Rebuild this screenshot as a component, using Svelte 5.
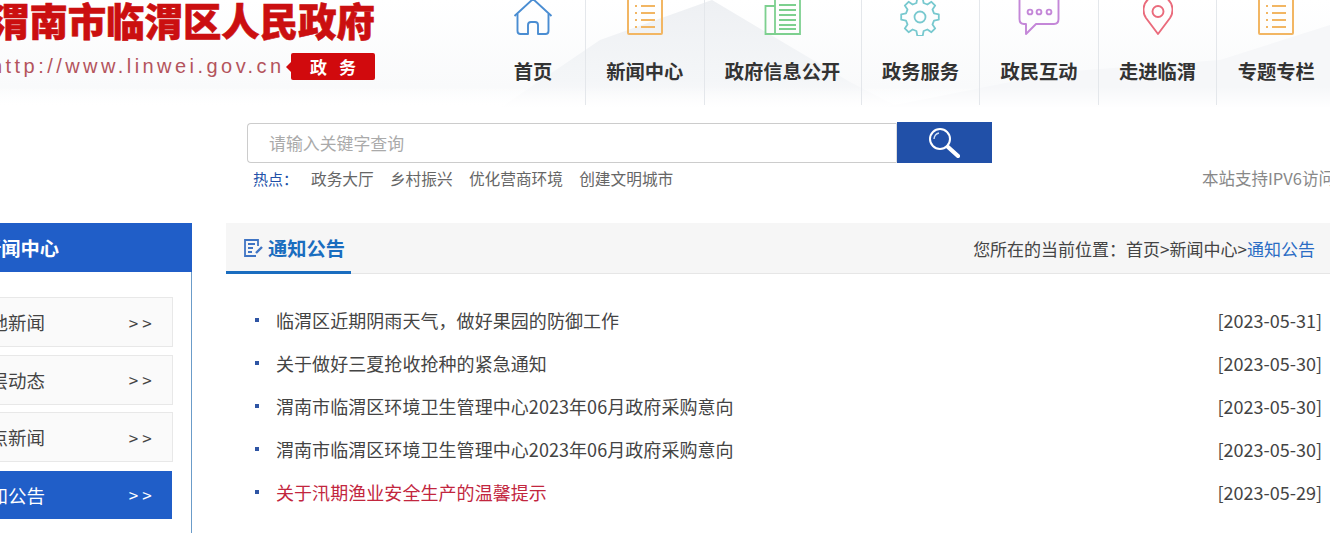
<script>
  const nav = [
    { label: '首页', icon: 'home' },
    { label: '新闻中心', icon: 'list' },
    { label: '政府信息公开', icon: 'doc' },
    { label: '政务服务', icon: 'gear' },
    { label: '政民互动', icon: 'chat' },
    { label: '走进临渭', icon: 'pin' },
    { label: '专题专栏', icon: 'list' }
  ];
  const hot = ['政务大厅', '乡村振兴', '优化营商环境', '创建文明城市'];
  const side = [
    { label: '本地新闻' },
    { label: '基层动态' },
    { label: '热点新闻' },
    { label: '通知公告', active: true }
  ];
  const rows = [
    { title: '临渭区近期阴雨天气\uFF0C做好果园的防御工作', date: '2023-05-31' },
    { title: '关于做好三夏抢收抢种的紧急通知', date: '2023-05-30' },
    { title: '渭南市临渭区环境卫生管理中心2023年06月政府采购意向', date: '2023-05-30' },
    { title: '渭南市临渭区环境卫生管理中心2023年06月政府采购意向', date: '2023-05-30' },
    { title: '关于汛期渔业安全生产的温馨提示', date: '2023-05-29', red: true }
  ];

  // cog outline: 8 teeth round the centre of the icon
  function gearPath(cx, cy, outer, inner, teeth) {
    const step = (Math.PI * 2) / teeth;
    const pts = [];
    for (let i = 0; i < teeth; i++) {
      const a = i * step - Math.PI / 2;
      [[-0.32, inner], [-0.18, outer], [0.18, outer], [0.32, inner]].forEach(([f, r]) => {
        const t = a + f * step;
        pts.push((cx + r * Math.cos(t)).toFixed(1) + ' ' + (cy + r * Math.sin(t)).toFixed(1));
      });
    }
    return 'M' + pts.join(' L') + ' Z';
  }
  const gear = gearPath(20, 19, 19, 14.5, 8);
</script>

<div class="page">
  <header class="top">
    <svg class="hills" viewBox="0 0 1330 108" preserveAspectRatio="none" aria-hidden="true">
      <defs>
        <linearGradient id="hill" x1="0" y1="0" x2="0" y2="1">
          <stop offset="0" stop-color="#eef0f3" />
          <stop offset="0.75" stop-color="#f4f6f8" />
          <stop offset="1" stop-color="#fbfbfc" />
        </linearGradient>
        <linearGradient id="fade" x1="0" y1="0" x2="0" y2="1">
          <stop offset="0.8" stop-color="#fff" stop-opacity="0" />
          <stop offset="1" stop-color="#fff" stop-opacity="1" />
        </linearGradient>
      </defs>
      <polygon points="500,108 600,40 712,0 850,82 900,108" fill="url(#hill)" />
      <polygon points="880,108 1060,72 1220,60 1330,25 1330,108" fill="#f6f7f9" />
      <rect x="0" y="0" width="1330" height="108" fill="url(#fade)" />
    </svg>
    <div class="logo">
      <div class="site-name">渭南市临渭区人民政府</div>
      <div class="site-sub">
        <span class="url">http://www.linwei.gov.cn</span>
        <span class="tag">政 务</span>
      </div>
    </div>
    <nav class="nav">
      {#each nav as item, i}
        <a class="nav-item" class:first={i === 0} href="#top">
          <span class="nav-icon">
            {#if item.icon === 'home'}
              <svg width="40" height="38" viewBox="0 0 40 38" fill="none" stroke="#4a8dd2" stroke-width="1.9" stroke-linejoin="round">
                <path d="M1.5 18 L20 1 L38.5 18" />
                <path d="M4.5 16 V33 Q4.5 36 7.5 36 H15 V27 Q15 24 18 24 H22 Q25 24 25 27 V36 H32.5 Q35.5 36 35.5 33 V16" />
              </svg>
            {:else if item.icon === 'list'}
              <svg width="36" height="38" viewBox="0 0 36 38" fill="none" stroke="#f2b663" stroke-width="2">
                <rect x="1" y="-4" width="34" height="40" rx="1" />
                <path d="M8 8 h2 M14 8 h14 M8 15 h2 M14 15 h14 M8 22 h2 M14 22 h14 M8 29 h2 M14 29 h14" />
              </svg>
            {:else if item.icon === 'doc'}
              <svg width="38" height="38" viewBox="0 0 38 38" fill="none" stroke="#7dd08f" stroke-width="1.8">
                <path d="M11 8 H1.5 V36 H36 V-4 H11 V36" />
                <path d="M15 7 h17 M15 12 h17 M15 17 h17 M15 22 h17 M15 27 h17 M15 31 h17" />
              </svg>
            {:else if item.icon === 'gear'}
              <svg width="40" height="38" viewBox="0 0 40 38" fill="none" stroke="#78c9cf" stroke-width="1.8" stroke-linejoin="round">
                <path d={gear} />
                <circle cx="20" cy="19" r="5.5" />
              </svg>
            {:else if item.icon === 'chat'}
              <svg width="42" height="38" viewBox="0 0 42 38" fill="none" stroke="#c487d8" stroke-width="1.9" stroke-linejoin="round">
                <path d="M1.5 -4 V21 Q1.5 26 6 26 H8 V36 L18 26 H36 Q40.5 26 40.5 21 V-4" />
                <circle cx="12" cy="14" r="2.4" />
                <circle cx="21" cy="14" r="2.4" />
                <circle cx="31" cy="14" r="2.4" />
              </svg>
            {:else}
              <svg width="30" height="38" viewBox="0 0 30 38" fill="none" stroke="#ea6b7c" stroke-width="1.9" stroke-linejoin="round">
                <path d="M15 36 L3 20 A14.5 14.5 0 1 1 27 20 Z" />
                <circle cx="15" cy="13.5" r="5.5" />
              </svg>
            {/if}
          </span>
          <span class="nav-label">{item.label}</span>
        </a>
      {/each}
    </nav>
  </header>

  <section class="search-wrap">
    <div class="search">
      <div class="search-input">请输入关键字查询</div>
      <button class="search-btn" aria-label="搜索">
        <svg width="32" height="30" viewBox="0 0 32 30" fill="none">
          <circle cx="12" cy="11" r="10" stroke="#fff" stroke-width="2" />
          <path d="M6 11 Q6.5 6 11 5" stroke="#cfe0f5" stroke-width="1.4" />
          <path d="M20 19 L30 28" stroke="#fff" stroke-width="4.2" stroke-linecap="round" />
        </svg>
      </button>
    </div>
    <div class="hot-row">
      <span class="hot-label">热点&#xFF1A;</span>
      {#each hot as h}
        <span class="hot-item">{h}</span>
      {/each}
      <span class="ipv6">本站支持IPV6访问</span>
    </div>
  </section>

  <div class="body">
    <aside class="side">
      <div class="side-head">新闻中心</div>
      <ul class="side-list">
        {#each side as s}
          <li class="side-item" class:active={s.active}>
            <span>{s.label}</span>
            <span class="arrows">&gt;&gt;</span>
          </li>
        {/each}
      </ul>
    </aside>

    <main class="main">
      <div class="main-head">
        <div class="tab">
          <svg width="20" height="20" viewBox="0 0 20 20" fill="none" stroke="#3f74c4" stroke-width="1.8">
            <path d="M15 8 V2 H2 V18 H13" />
            <path d="M5 6 H12 M5 10 H10 M5 14 H9" />
            <path d="M13 15 L19 9" stroke-width="2.4" />
          </svg>
          <span>通知公告</span>
        </div>
        <div class="crumb">您所在的当前位置&#xFF1A;首页&gt;新闻中心&gt;<span class="crumb-on">通知公告</span></div>
      </div>
      <ul class="rows">
        {#each rows as r}
          <li class="row" class:red={r.red}>
            <span class="dot"></span>
            <span class="row-title">{r.title}</span>
            <span class="row-date">[{r.date}]</span>
          </li>
        {/each}
      </ul>
    </main>
  </div>
</div>

<style>
  :global(body) {
    margin: 0;
    background: #fff;
    overflow: hidden;
  }

  ul {
    list-style: none;
    margin: 0;
    padding: 0;
  }

  .page {
    width: 1330px;
    height: 533px;
    overflow: hidden;
    font-family: "Noto Sans CJK SC", "Noto Sans", sans-serif;
  }

  .top {
    position: relative;
    height: 108px;
    display: flex;
    justify-content: space-between;
    background: linear-gradient(180deg, #fff 0%, #f9fafb 80%, #fff 100%);
  }

  .hills {
    position: absolute;
    inset: 0;
    width: 100%;
    height: 100%;
  }

  .logo {
    position: relative;
    margin-left: -9px;
    width: 384px;
    flex: none;
  }

  .site-name {
    height: 40px;
    margin-top: -3px;
    font-size: 38.4px;
    line-height: 44px;
    font-weight: 900;
    color: #cb0f10;
    -webkit-text-stroke: 0.6px #cb0f10;
    white-space: nowrap;
  }

  .site-sub {
    display: flex;
    align-items: center;
    margin-top: 16px;
    height: 27px;
  }

  .url {
    font-family: "Liberation Sans", sans-serif;
    font-size: 20px;
    letter-spacing: 3.45px;
    color: #b4545c;
    white-space: nowrap;
  }

  .tag {
    margin-left: auto;
    position: relative;
    width: 84px;
    box-sizing: border-box;
    padding-left: 4px;
    height: 27px;
    line-height: 27px;
    text-align: center;
    background: #d10a0d;
    border-radius: 2px;
    color: #fff;
    font-size: 17px;
    font-weight: 700;
    letter-spacing: 4px;
    white-space: nowrap;
  }

  .tag::before {
    content: "";
    position: absolute;
    left: -5px;
    top: 9px;
    border-style: solid;
    border-width: 5px 5px 5px 0;
    border-color: transparent #d10a0d transparent transparent;
  }

  .nav {
    position: relative;
    display: flex;
    margin-right: -5px;
    height: 105px;
  }

  .nav-item {
    display: flex;
    flex-direction: column;
    align-items: center;
    padding: 0 20.3px;
    border-left: 1px solid #e4e7eb;
    color: #333;
    text-decoration: none;
  }

  .nav-item.first {
    border-left: none;
    padding: 0 32px 0 33px;
  }

  .nav-icon {
    height: 36px;
    display: flex;
    align-items: flex-end;
    justify-content: center;
  }

  .nav-label {
    margin-top: 21px;
    font-size: 19.25px;
    line-height: 28px;
    font-weight: 700;
    white-space: nowrap;
  }

  .search-wrap {
    padding-left: 247px;
    margin-top: 14px;
  }

  .search {
    display: flex;
    width: 745px;
    height: 41px;
  }

  .search-input {
    flex: 1;
    margin-top: 1px;
    padding-left: 21px;
    border: 1px solid #ccc;
    border-right-color: #ddd;
    border-radius: 4px 0 0 4px;
    font-size: 16.9px;
    line-height: 38px;
    color: #aaa;
  }

  .search-btn {
    width: 95px;
    padding: 0 2px 0 0;
    border: none;
    background: #2150a8;
    display: flex;
    align-items: center;
    justify-content: center;
  }

  .hot-row {
    display: flex;
    align-items: center;
    height: 30px;
    padding-left: 6px;
    font-size: 15.7px;
    color: #666;
    white-space: nowrap;
  }

  .hot-label {
    flex: none;
    width: 58px;
    color: #2150a8;
    font-size: 15px;
  }

  .hot-item {
    flex: none;
    margin-right: 16.2px;
  }

  .ipv6 {
    flex: none;
    margin-left: 512.5px;
    color: #888;
    font-size: 16.5px;
  }

  .body {
    display: flex;
    margin-top: 30px;
  }

  .side {
    width: 192px;
    flex: none;
    height: 310px;
    border-right: 1px solid #6b9cc9;
    box-sizing: border-box;
  }

  .side-head {
    height: 49px;
    padding-left: 142px;
    margin-left: -160px;
    width: 210px;
    background: #205ec8;
    color: #fff;
    font-size: 19.25px;
    font-weight: 700;
    line-height: 50px;
    white-space: nowrap;
  }

  .side-list {
    display: flex;
    flex-direction: column;
    gap: 7.67px;
    margin: 25px 18px 0 -40px;
  }

  .side-item {
    height: 50px;
    box-sizing: border-box;
    display: flex;
    justify-content: space-between;
    align-items: center;
    padding: 0 16.4px 0 10px;
    background: #fafafa;
    border: 1px solid #e8e8e8;
    font-size: 18.5px;
    color: #444;
  }

  .side-item.active {
    background: #205ec8;
    background-clip: padding-box;
    border-color: #fff;
    color: #fff;
  }

  .arrows {
    font-size: 17px;
    letter-spacing: 4px;
  }

  .main {
    flex: 1;
    margin-left: 34px;
    min-width: 0;
  }

  .main-head {
    height: 50px;
    display: flex;
    justify-content: space-between;
    align-items: center;
    background: #f6f6f6;
    border-bottom: 1px solid #e6e6e6;
    padding-right: 15px;
  }

  .tab {
    height: 50px;
    margin-bottom: -1px;
    width: 125px;
    box-sizing: border-box;
    padding: 1px 0 0 17px;
    display: flex;
    align-items: center;
    gap: 5px;
    border-bottom: 3px solid #1a6dbf;
    color: #1a6dbf;
    font-size: 19.25px;
    font-weight: 700;
    white-space: nowrap;
  }

  .crumb {
    font-size: 17px;
    color: #444;
  }

  .crumb-on {
    color: #2a6cc4;
  }

  .rows {
    margin-top: 24px;
    padding: 0 8px 0 29px;
  }

  .row {
    height: 43px;
    display: flex;
    align-items: center;
    font-size: 18px;
    color: #444;
  }

  .row.red .row-title {
    color: #c2263e;
  }

  .row-title {
    letter-spacing: 0.06px;
  }

  .dot {
    width: 4px;
    height: 4px;
    margin-right: 17px;
    background: #2f55a4;
  }

  .row-date {
    margin-left: auto;
    font-size: 18px;
    color: #444;
  }
</style>
